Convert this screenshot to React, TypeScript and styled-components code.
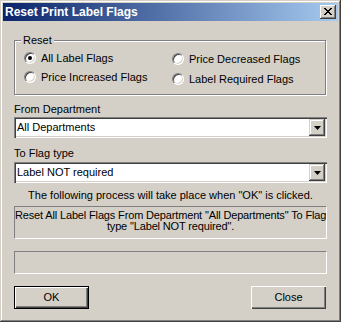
import React from 'react'
import styled, { createGlobalStyle } from 'styled-components'

const GlobalStyle = createGlobalStyle`
  html, body {
    margin: 0;
    padding: 0;
    background-color: #d4d0c8;
  }
  body {
    font-family: 'Liberation Sans', Arial, sans-serif;
    font-size: 11px;
    color: #000;
  }
`

const Window = styled.div`
	width: 341px;
	height: 322px;
	box-sizing: border-box;
	padding: 3px;
	background-color: #d4d0c8;
	box-shadow: inset -1px -1px 0 #404040, inset 1px 1px 0 #d4d0c8,
		inset -2px -2px 0 #808080, inset 2px 2px 0 #fff;
	display: flex;
	flex-direction: column;
`

const Caption = styled.div`
	height: 18px;
	display: flex;
	align-items: center;
	justify-content: space-between;
	padding: 0 2px 0 2px;
	background: linear-gradient(to right, #0a246a, #a6caf0);
`

const CaptionTitle = styled.span`
	color: #fff;
	font-weight: bold;
	font-size: 12px;
`

const CloseBox = styled.div`
	width: 16px;
	height: 14px;
	box-sizing: border-box;
	background-color: #d4d0c8;
	box-shadow: inset -1px -1px 0 #404040, inset 1px 1px 0 #fff,
		inset -2px -2px 0 #808080;
	display: flex;
	align-items: center;
	justify-content: center;
	padding: 0 1px 1px 0;
`

const Body = styled.div`
	padding: 0 11px;
	display: flex;
	flex-direction: column;
`

const Group = styled.div`
	position: relative;
	margin-top: 19px;
	height: 55px;
	width: 312px;
	box-sizing: border-box;
	border: 1px solid #808080;
	box-shadow: 1px 1px 0 #fff, inset 1px 1px 0 #fff;
	padding: 11px 0 0 9px;
	display: flex;
`

const Legend = styled.span`
	position: absolute;
	top: -7px;
	left: 6px;
	padding: 0 2px;
	line-height: 13px;
	background-color: #d4d0c8;
`

const RadioColumn = styled.div<{ $gap: number; $offset: number; $width?: number }>`
	display: flex;
	flex-direction: column;
	gap: ${(p) => p.$gap}px;
	margin-top: ${(p) => p.$offset}px;
	width: ${(p) => (p.$width ? `${p.$width}px` : 'auto')};
`

const RadioItem = styled.label`
	display: flex;
	align-items: center;
	gap: 5px;
	height: 12px;
	line-height: 12px;
	white-space: nowrap;
`

const RadioCircle = styled.span<{ $checked?: boolean }>`
	position: relative;
	width: 12px;
	height: 12px;
	box-sizing: border-box;
	border-radius: 50%;
	background-color: #fff;
	border: 1px solid;
	border-color: #808080 #fff #fff #808080;
	box-shadow: inset 1px 1px 0 #404040, inset -1px -1px 0 #d4d0c8;
	flex: 0 0 auto;

	&::after {
		content: '';
		display: ${(p) => (p.$checked ? 'block' : 'none')};
		position: absolute;
		left: 3px;
		top: 3px;
		width: 4px;
		height: 4px;
		border-radius: 50%;
		background-color: #000;
	}
`

const FieldLabel = styled.div<{ $top: number }>`
	margin-top: ${(p) => p.$top}px;
	line-height: 13px;
`

const Combo = styled.div<{ $top: number }>`
	margin-top: ${(p) => p.$top}px;
	height: 21px;
	box-sizing: border-box;
	padding: 2px;
	background-color: #fff;
	box-shadow: inset 1px 1px 0 #808080, inset 2px 2px 0 #404040,
		inset -1px -1px 0 #fff, inset -2px -2px 0 #d4d0c8;
	display: flex;
	align-items: center;
`

const ComboText = styled.span`
	flex: 1;
	padding-left: 1px;
	line-height: 17px;
`

const ComboButton = styled.span`
	width: 16px;
	height: 17px;
	box-sizing: border-box;
	background-color: #d4d0c8;
	box-shadow: inset -1px -1px 0 #404040, inset 1px 1px 0 #d4d0c8,
		inset -2px -2px 0 #808080, inset 2px 2px 0 #fff;
	display: flex;
	align-items: center;
	justify-content: center;
`

const Notice = styled.div`
	margin-top: 6px;
	line-height: 13px;
	text-align: center;
`

const Sunken = styled.div<{ $top: number; $height: number }>`
	margin-top: ${(p) => p.$top}px;
	height: ${(p) => p.$height}px;
	box-sizing: border-box;
	border: 1px solid;
	border-color: #808080 #fff #fff #808080;
	padding: 3px 0 0;
	text-align: center;
	line-height: 11px;
	white-space: nowrap;
	letter-spacing: -0.15px;
	overflow: hidden;
`

const ButtonRow = styled.div`
	margin-top: 12px;
	display: flex;
	justify-content: space-between;
	padding-right: 1px;
`

const PushButton = styled.button<{ $default?: boolean }>`
	width: 75px;
	height: 23px;
	margin: 0;
	padding: 0 0 1px;
	box-sizing: border-box;
	font-family: 'Liberation Sans', Arial, sans-serif;
	font-size: 11px;
	color: #000;
	background-color: #d4d0c8;
	border: ${(p) => (p.$default ? '1px solid #000' : 'none')};
	box-shadow: inset 1px 1px 0 #fff, inset -1px -1px 0 #404040,
		inset -2px -2px 0 #808080;
`

const DownArrow = () => (
	<svg width='7' height='4' viewBox='0 0 7 4'>
		<path d='M0 0h7L3.5 4z' fill='#000' />
	</svg>
)

const CloseGlyph = () => (
	<svg width='8' height='7' viewBox='0 0 8 7' shapeRendering='crispEdges'>
		<path
			d='M0 0h2v1h-2zM6 0h2v1h-2zM1 1h2v1h-2zM5 1h2v1h-2zM2 2h4v1h-4zM3 3h2v1h-2zM2 4h4v1h-4zM1 5h2v1h-2zM5 5h2v1h-2zM0 6h2v1h-2zM6 6h2v1h-2z'
			fill='#000'
		/>
	</svg>
)

const Radio: React.FC<{ label: string; checked?: boolean }> = ({ label, checked }) => (
	<RadioItem>
		<RadioCircle $checked={checked} />
		{label}
	</RadioItem>
)

const App: React.FC = () => {
	const department = 'All Departments'
	const flagType = 'Label NOT required'

	return (
		<>
			<GlobalStyle />
			<Window>
				<Caption>
					<CaptionTitle>Reset Print Label Flags</CaptionTitle>
					<CloseBox>
						<CloseGlyph />
					</CloseBox>
				</Caption>
				<Body>
					<Group>
						<Legend>Reset</Legend>
						<RadioColumn $gap={7} $offset={0} $width={148}>
							<Radio label='All Label Flags' checked />
							<Radio label='Price Increased Flags' />
						</RadioColumn>
						<RadioColumn $gap={8} $offset={1}>
							<Radio label='Price Decreased Flags' />
							<Radio label='Label Required Flags' />
						</RadioColumn>
					</Group>

					<FieldLabel $top={8}>From Department</FieldLabel>
					<Combo $top={1}>
						<ComboText>{department}</ComboText>
						<ComboButton>
							<DownArrow />
						</ComboButton>
					</Combo>

					<FieldLabel $top={9}>To Flag type</FieldLabel>
					<Combo $top={2}>
						<ComboText>{flagType}</ComboText>
						<ComboButton>
							<DownArrow />
						</ComboButton>
					</Combo>

					<Notice>The following process will take place when "OK" is clicked.</Notice>
					<Sunken $top={4} $height={33}>
						Reset All Label Flags From Department "{department}" To Flag
						<br />
						type "{flagType}".
					</Sunken>
					<Sunken $top={12} $height={23} />

					<ButtonRow>
						<PushButton $default>OK</PushButton>
						<PushButton>Close</PushButton>
					</ButtonRow>
				</Body>
			</Window>
		</>
	)
}

export default App
